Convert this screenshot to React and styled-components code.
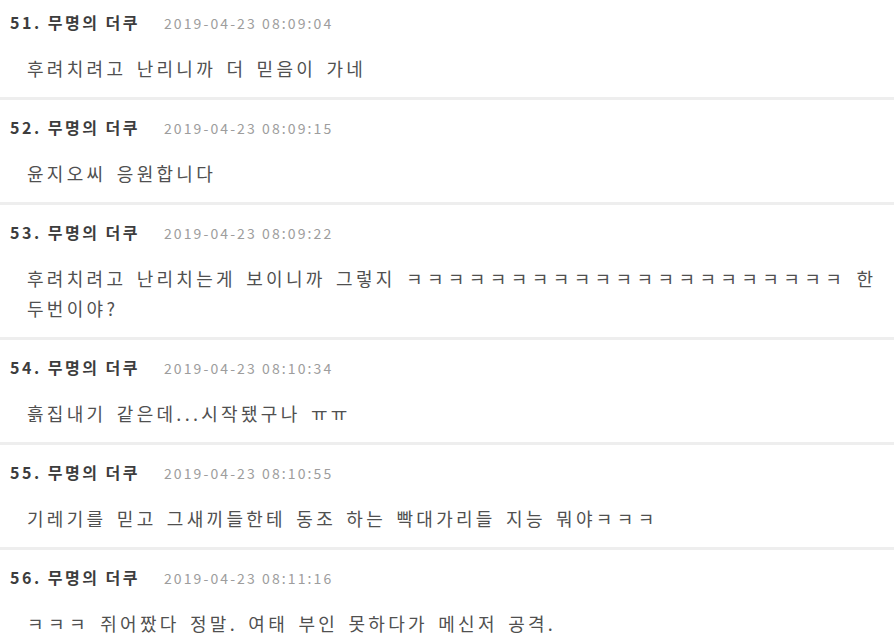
import React from 'react'
import styled, { createGlobalStyle } from 'styled-components'

const comments = [
  { no: 51, nick: '무명의 더쿠', date: '2019-04-23 08:09:04', text: '후려치려고 난리니까 더 믿음이 가네' },
  { no: 52, nick: '무명의 더쿠', date: '2019-04-23 08:09:15', text: '윤지오씨 응원합니다' },
  { no: 53, nick: '무명의 더쿠', date: '2019-04-23 08:09:22', text: '후려치려고 난리치는게 보이니까 그렇지 ㅋㅋㅋㅋㅋㅋㅋㅋㅋㅋㅋㅋㅋㅋㅋㅋㅋㅋㅋㅋㅋ 한 두번이야?' },
  { no: 54, nick: '무명의 더쿠', date: '2019-04-23 08:10:34', text: '흙집내기 같은데...시작됐구나 ㅠㅠ' },
  { no: 55, nick: '무명의 더쿠', date: '2019-04-23 08:10:55', text: '기레기를 믿고 그새끼들한테 동조 하는 빡대가리들 지능 뭐야ㅋㅋㅋ' },
  { no: 56, nick: '무명의 더쿠', date: '2019-04-23 08:11:16', text: 'ㅋㅋㅋ 쥐어짰다 정말. 여태 부인 못하다가 메신저 공격.' },
]

const GlobalStyle = createGlobalStyle`
  body {
    margin: 0;
    background: #fff;
    font-family: "Noto Sans CJK KR", "Noto Sans", sans-serif;
    overflow: hidden;
  }
`

// jamo runs (ㅋㅋㅋ) sit a bit wider than syllables in the original font
const renderText = text =>
  text.split(/(ㅋ+)/).map((part, i) =>
    /^ㅋ+$/.test(part) ? <Laugh key={i}>{part}</Laugh> : part
  )

const CommentList = () => {
  return (
    <List>
      {comments.map(c => (
        <Item key={c.no}>
          <Header>
            <Author>{c.no}. {c.nick}</Author>
            <DateText>{c.date}</DateText>
          </Header>
          <Body>{renderText(c.text)}</Body>
        </Item>
      ))}
    </List>
  )
}

const List = styled.ul`
  margin: -5px 0 0;
  padding: 0;
  list-style: none;
`

const Item = styled.li`
  padding: 17px 8px 14px 10px;
  border-bottom: 3px solid #eeeeee;
`

const Header = styled.div`
  display: flex;
  align-items: baseline;
  height: 20px;
  line-height: 20px;
`

const Author = styled.span`
  font-size: 16px;
  font-weight: 700;
  color: #3d3d3d;
  letter-spacing: 2.5px;
`

const DateText = styled.span`
  margin-left: 24px;
  font-size: 14px;
  color: #9d9d9d;
  letter-spacing: 2.1px;
`

const Body = styled.p`
  margin: 21px 0 0;
  padding-left: 17px;
  font-size: 18px;
  line-height: 30px;
  color: #505050;
  letter-spacing: 3.3px;
  word-spacing: 3px;
  word-break: keep-all;
`

const Laugh = styled.span`
  letter-spacing: 4.4px;
`

export default function App() {
  return (
    <>
      <GlobalStyle />
      <CommentList />
    </>
  )
}
